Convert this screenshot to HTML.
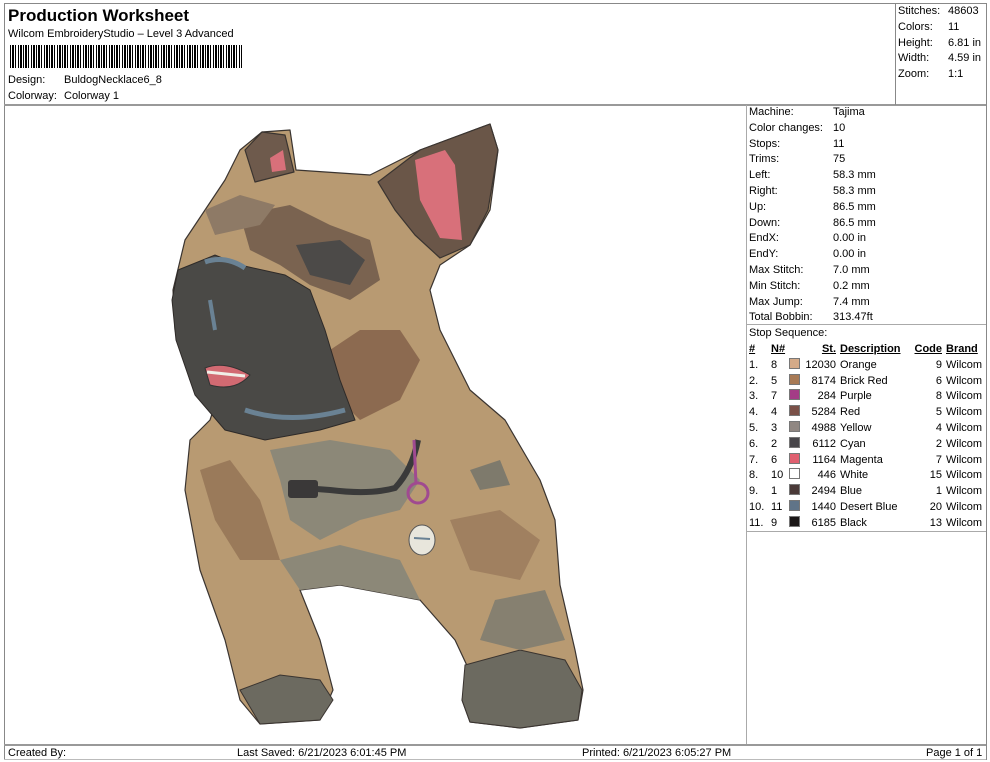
<!DOCTYPE html>
<html><head><meta charset="utf-8"><style>
body{margin:0;width:990px;height:762px;background:#fff;font-family:"Liberation Sans",sans-serif;font-size:11px;color:#000;position:relative;overflow:hidden}
.a{position:absolute;white-space:nowrap}
.l{position:absolute;background:#888}
table{border-collapse:collapse;position:absolute;font-size:11px}
td{padding:0;height:15.8px;line-height:15.8px;white-space:nowrap}
.sw{display:inline-block;width:9px;height:9px;border:1px solid #777;vertical-align:-1px}
</style></head><body>
<div class="l" style="left:4px;top:3px;width:982px;height:1px"></div>
<div class="l" style="left:4px;top:3px;width:1px;height:757px"></div>
<div class="l" style="left:986px;top:3px;width:1px;height:757px"></div>
<div class="l" style="left:4px;top:104px;width:982px;height:2px;background:#999"></div>
<div class="l" style="left:895px;top:3px;width:1px;height:102px"></div>
<div class="l" style="left:746px;top:105px;width:1px;height:639px;background:#aaa"></div>
<div class="l" style="left:746px;top:324px;width:240px;height:1px;background:#aaa"></div>
<div class="l" style="left:746px;top:531px;width:240px;height:1px;background:#aaa"></div>
<div class="l" style="left:4px;top:744px;width:982px;height:2px;background:#999"></div>
<div class="l" style="left:4px;top:759px;width:982px;height:1px;background:#bbb"></div>

<div class="a" style="left:8px;top:6px;font-size:17px;font-weight:bold">Production Worksheet</div>
<div class="a" style="left:8px;top:28px">Wilcom EmbroideryStudio – Level 3 Advanced</div>
<div class="a" style="left:10px;top:45px;width:232px;height:23px;background:repeating-linear-gradient(90deg,#000 0 1px,#fff 1px 2px,#000 2px 4px,#fff 4px 5px,#000 5px 6px,#fff 6px 8px,#000 8px 9px,#fff 9px 10px,#000 10px 12px,#fff 12px 13px)"></div>
<div class="a" style="left:8px;top:74px">Design:</div><div class="a" style="left:64px;top:74px">BuldogNecklace6_8</div>
<div class="a" style="left:8px;top:90px">Colorway:</div><div class="a" style="left:64px;top:90px">Colorway 1</div>

<table style="left:898px;top:4px"><tr><td style="width:50px">Stitches:</td><td>48603</td></tr><tr><td>Colors:</td><td>11</td></tr><tr><td>Height:</td><td>6.81 in</td></tr><tr><td>Width:</td><td>4.59 in</td></tr><tr><td>Zoom:</td><td>1:1</td></tr></table>

<table style="left:749px;top:104px;margin-top:1px"><tr><td style="width:84px">Machine:</td><td>Tajima</td></tr><tr><td>Color changes:</td><td>10</td></tr><tr><td>Stops:</td><td>11</td></tr><tr><td>Trims:</td><td>75</td></tr><tr><td>Left:</td><td>58.3 mm</td></tr><tr><td>Right:</td><td>58.3 mm</td></tr><tr><td>Up:</td><td>86.5 mm</td></tr><tr><td>Down:</td><td>86.5 mm</td></tr><tr><td>EndX:</td><td>0.00 in</td></tr><tr><td>EndY:</td><td>0.00 in</td></tr><tr><td>Max Stitch:</td><td>7.0 mm</td></tr><tr><td>Min Stitch:</td><td>0.2 mm</td></tr><tr><td>Max Jump:</td><td>7.4 mm</td></tr><tr><td>Total Bobbin:</td><td>313.47ft</td></tr></table>

<div class="a" style="left:749px;top:327px">Stop Sequence:</div>
<table style="left:749px;top:342px">
<tr style="font-weight:bold;text-decoration:underline"><td style="width:22px">#</td><td style="width:18px">N#</td><td style="width:13px"></td><td style="width:34px;text-align:right">St.</td><td style="width:4px"></td><td style="width:70px">Description</td><td style="width:32px;text-align:right">Code</td><td style="width:4px"></td><td>Brand</td></tr>
<tr><td>1.</td><td>8</td><td><span class="sw" style="background:#d4aa88"></span></td><td align="right">12030</td><td></td><td>Orange</td><td align="right">9</td><td></td><td>Wilcom</td></tr>
<tr><td>2.</td><td>5</td><td><span class="sw" style="background:#a87a55"></span></td><td align="right">8174</td><td></td><td>Brick Red</td><td align="right">6</td><td></td><td>Wilcom</td></tr>
<tr><td>3.</td><td>7</td><td><span class="sw" style="background:#a43c86"></span></td><td align="right">284</td><td></td><td>Purple</td><td align="right">8</td><td></td><td>Wilcom</td></tr>
<tr><td>4.</td><td>4</td><td><span class="sw" style="background:#7a5048"></span></td><td align="right">5284</td><td></td><td>Red</td><td align="right">5</td><td></td><td>Wilcom</td></tr>
<tr><td>5.</td><td>3</td><td><span class="sw" style="background:#908782"></span></td><td align="right">4988</td><td></td><td>Yellow</td><td align="right">4</td><td></td><td>Wilcom</td></tr>
<tr><td>6.</td><td>2</td><td><span class="sw" style="background:#48464a"></span></td><td align="right">6112</td><td></td><td>Cyan</td><td align="right">2</td><td></td><td>Wilcom</td></tr>
<tr><td>7.</td><td>6</td><td><span class="sw" style="background:#e06070"></span></td><td align="right">1164</td><td></td><td>Magenta</td><td align="right">7</td><td></td><td>Wilcom</td></tr>
<tr><td>8.</td><td>10</td><td><span class="sw" style="background:#fff"></span></td><td align="right">446</td><td></td><td>White</td><td align="right">15</td><td></td><td>Wilcom</td></tr>
<tr><td>9.</td><td>1</td><td><span class="sw" style="background:#4a3a38"></span></td><td align="right">2494</td><td></td><td>Blue</td><td align="right">1</td><td></td><td>Wilcom</td></tr>
<tr><td>10.</td><td>11</td><td><span class="sw" style="background:#607488"></span></td><td align="right">1440</td><td></td><td>Desert Blue</td><td align="right">20</td><td></td><td>Wilcom</td></tr>
<tr><td>11.</td><td>9</td><td><span class="sw" style="background:#1a1616"></span></td><td align="right">6185</td><td></td><td>Black</td><td align="right">13</td><td></td><td>Wilcom</td></tr>
</table>

<div class="a" style="left:8px;top:747px">Created By:</div>
<div class="a" style="left:237px;top:747px">Last Saved: 6/21/2023 6:01:45 PM</div>
<div class="a" style="left:582px;top:747px">Printed: 6/21/2023 6:05:27 PM</div>
<div class="a" style="left:926px;top:747px">Page 1 of 1</div>

<svg class="a" style="left:0;top:0" width="990" height="762" viewBox="0 0 990 762">
<g stroke="#3a3430" stroke-width="1.2" stroke-linejoin="round">
<polygon fill="#b89a72" points="262,132 290,130 296,170 370,175 380,170 420,150 490,124 498,150 490,210 470,245 440,265 430,290 440,330 470,390 505,420 540,480 555,520 560,585 575,650 583,690 578,720 520,728 470,722 462,700 470,672 455,640 420,600 340,585 300,590 320,640 333,690 320,720 260,724 240,700 225,640 200,570 185,490 190,440 210,420 215,405 190,380 175,330 173,290 185,240 225,180 240,150"/>
<polygon fill="#6e5a4c" points="245,150 262,132 285,135 294,172 255,182"/>
<polygon fill="#6a5648" points="378,182 420,150 490,124 498,150 488,210 470,245 440,258 415,235 395,210"/>
</g>
<polygon fill="#d8707a" points="415,160 445,150 455,165 462,240 440,238 420,200"/>
<polygon fill="#d8707a" points="270,158 283,150 286,170 272,172"/>
<polygon fill="#7a6350" points="240,215 290,205 330,225 370,240 380,280 350,300 310,285 280,265 250,250"/>
<polygon fill="#4c4a48" points="296,245 340,240 365,260 350,285 310,275"/>
<polygon fill="#8e7a66" points="205,210 240,195 275,205 260,225 215,235"/>
<polygon fill="#8c8878" points="270,450 330,440 390,450 420,480 400,510 360,520 320,540 290,520 280,480"/>
<polygon fill="#8c8878" points="280,560 340,545 400,560 420,600 340,585 300,590"/>
<polygon fill="#9a7a5a" points="200,470 230,460 260,500 280,560 240,560 215,520"/>
<polygon fill="#8c6a50" points="330,350 360,330 400,330 420,360 400,400 360,420 340,400"/>
<polygon fill="#a08060" points="450,520 500,510 540,540 520,580 470,570"/>
<polygon fill="#7e7a6c" points="470,470 500,460 510,485 480,490"/>
<polygon fill="#6c6a60" stroke="#3a3430" stroke-width="1" points="465,665 520,650 565,660 582,690 578,720 520,728 470,722 462,700"/>
<polygon fill="#6c6a60" stroke="#3a3430" stroke-width="1" points="240,690 280,675 320,680 333,700 320,720 260,724"/>
<polygon fill="#868070" points="495,600 545,590 565,640 520,650 480,640"/>
<polygon fill="#4a4946" stroke="#2e2a28" stroke-width="1" points="178,270 215,255 240,265 285,275 310,290 325,330 340,380 355,420 320,430 265,440 225,430 195,395 176,340 172,300"/>
<path d="M205,262 Q225,255 245,268" stroke="#6a8294" stroke-width="5" fill="none"/>
<path d="M245,410 Q290,425 345,410" stroke="#6a8294" stroke-width="5" fill="none"/>
<path d="M210,300 L215,330" stroke="#6a8294" stroke-width="4" fill="none"/>
<path d="M205,368 Q225,360 250,375 Q235,392 210,385 Z" fill="#d26a72" stroke="#333" stroke-width="1"/>
<path d="M207,372 L245,376" stroke="#f0efe8" stroke-width="3"/>
<path d="M290,487 L330,490 Q370,495 395,488 Q412,470 418,440" stroke="#3a3a3a" stroke-width="6" fill="none"/>
<rect x="288" y="480" width="30" height="18" rx="3" fill="#3a3838"/>
<circle cx="418" cy="493" r="10" fill="none" stroke="#a04a90" stroke-width="3"/>
<path d="M414,440 L416,484" stroke="#a04a90" stroke-width="3"/>
<ellipse cx="422" cy="540" rx="13" ry="15" fill="#e8e6dc" stroke="#555"/>
<path d="M414,538 L430,539" stroke="#6a8294" stroke-width="2"/>
</svg>
</body></html>
